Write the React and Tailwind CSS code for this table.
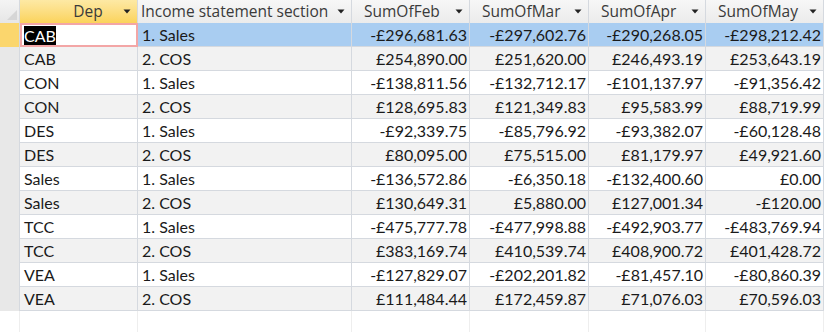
import React from 'react';

const rows = [
  ['CAB', '1. Sales', '-£296,681.63', '-£297,602.76', '-£290,268.05', '-£298,212.42'],
  ['CAB', '2. COS', '£254,890.00', '£251,620.00', '£246,493.19', '£253,643.19'],
  ['CON', '1. Sales', '-£138,811.56', '-£132,712.17', '-£101,137.97', '-£91,356.42'],
  ['CON', '2. COS', '£128,695.83', '£121,349.83', '£95,583.99', '£88,719.99'],
  ['DES', '1. Sales', '-£92,339.75', '-£85,796.92', '-£93,382.07', '-£60,128.48'],
  ['DES', '2. COS', '£80,095.00', '£75,515.00', '£81,179.97', '£49,921.60'],
  ['Sales', '1. Sales', '-£136,572.86', '-£6,350.18', '-£132,400.60', '£0.00'],
  ['Sales', '2. COS', '£130,649.31', '£5,880.00', '£127,001.34', '-£120.00'],
  ['TCC', '1. Sales', '-£475,777.78', '-£477,998.88', '-£492,903.77', '-£483,769.94'],
  ['TCC', '2. COS', '£383,169.74', '£410,539.74', '£408,900.72', '£401,428.72'],
  ['VEA', '1. Sales', '-£127,829.07', '-£202,201.82', '-£81,457.10', '-£80,860.39'],
  ['VEA', '2. COS', '£111,484.44', '£172,459.87', '£71,076.03', '£70,596.03'],
];

const headers = ['Income statement section', 'SumOfFeb', 'SumOfMar', 'SumOfApr', 'SumOfMay'];

const cols = 'grid grid-cols-[20px_118px_214px_118px_119px_117px_1fr]';

// little dropdown arrow used in every header cell
const Arrow = () => (
  <svg width="8" height="5" viewBox="0 0 8 5" className="shrink-0">
    <path d="M0.5 0.5 H7.5 L4 4.5 Z" fill="#222" />
  </svg>
);

export default function App() {
  return (
    <div className="w-[824px] h-[332px] overflow-hidden bg-white font-['Lato',sans-serif] text-[16px] text-[#1a1a1a]">
      {/* header row */}
      <div className={`${cols} h-[23px] border-b border-[#c9ced6] font-['Open_Sans',sans-serif] text-[15.5px] text-[#3a3a3a]`}>
        <div className="relative border-r border-[#d5d9df] bg-gradient-to-b from-[#f4f4f4] to-[#e6e6e6]">
          <svg width="10" height="10" viewBox="0 0 10 10" className="absolute right-[2px] bottom-[3px]">
            <path d="M10 0 L10 10 L0 10 Z" fill="#d6d6d6" />
          </svg>
        </div>
        <div className="flex items-center border-r border-[#d5d9df] bg-gradient-to-b from-[#fde9a4] to-[#fbd35a] pl-[33px] pr-[6px]">
          <span className="flex-1 text-center">Dep</span>
          <Arrow />
        </div>
        {headers.map((h, i) => (
          <div
            key={h}
            className={`flex items-center gap-[6px] overflow-hidden whitespace-nowrap border-r border-[#d5d9df] bg-gradient-to-b from-[#f7f7f7] to-[#ebebeb] pr-[6px] ${i === 0 ? 'pl-[3px]' : 'pl-[12px]'}`}
          >
            <span className="flex-1 overflow-hidden">{h}</span>
            <Arrow />
          </div>
        ))}
      </div>

      {rows.map((r, idx) => {
        const sel = idx === 0;
        const bg = sel ? 'bg-[#a9cdf1]' : idx % 2 === 0 ? 'bg-white' : 'bg-[#f2f2f2]';
        return (
          <div key={idx} className={`${cols} h-[24px] border-b border-[#d5d9df] ${bg}`}>
            <div className={`border-r border-[#d5d9df] ${sel ? 'bg-[#fbd66d]' : 'bg-[#e8e8e8]'}`} />
            {sel ? (
              <div className="flex items-center border-r border-[#d5d9df] bg-white pl-[4px] outline-2 -outline-offset-2 outline-[#f3a6a6]">
                <span className="bg-black leading-[19px] text-white">{r[0]}</span>
              </div>
            ) : (
              <div className="flex items-center border-r border-[#d5d9df] pl-[4px]">{r[0]}</div>
            )}
            <div className="flex items-center border-r border-[#d5d9df] pl-[4px]">{r[1]}</div>
            {r.slice(2).map((v, j) => (
              <div key={j} className="flex items-center justify-end border-r border-[#d5d9df] pr-[2px]">
                {v}
              </div>
            ))}
          </div>
        );
      })}

      {/* empty space below the last record */}
      <div className={`${cols} h-[24px]`}>
        {Array.from({ length: 7 }).map((_, i) => (
          <div key={i} className="border-r border-[#eeeeee]" />
        ))}
      </div>
    </div>
  );
}
